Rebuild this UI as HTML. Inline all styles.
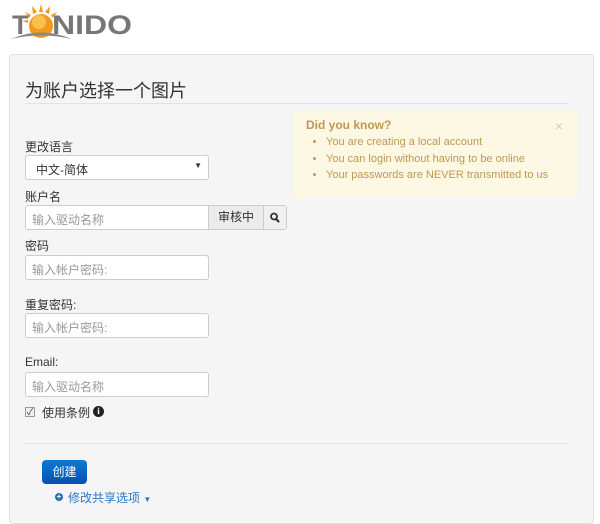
<!DOCTYPE html>
<html><head><meta charset="utf-8"><style>
*{box-sizing:border-box;margin:0;padding:0}
body{width:600px;height:504px;overflow:hidden;background:#fff;font-family:"Liberation Sans","Noto Sans CJK SC",sans-serif;font-size:12px;color:#333;position:relative}
.abs{position:absolute}
.panel{left:9px;top:54px;width:585px;height:470px;background:#f5f5f5;border:1px solid #e0e0e0;border-radius:4px}
.inp{position:absolute;left:25px;width:184px;height:25px;background:#fff;border:1px solid #ccc;border-radius:3px;color:#999;font-size:12px;padding:5px 6px}
.lbl{position:absolute;left:25px;font-size:12px;color:#333}
.alert{left:293px;top:110px;width:284px;height:88px;background:#fcf8e3;border-radius:3px;color:#c09853;font-size:11px;padding:8px 13px}
.alert b{font-size:12px}
.alert ul{margin-left:20px;margin-top:2px}
.alert li{line-height:16.5px}
</style></head><body>
<svg class="abs" style="left:10px;top:2px" width="125" height="38" viewBox="0 0 125 38">
<g fill="#f39a1c">
<polygon points="31,2 33,10 29,10"/><polygon points="40,4 39,12 35,10"/><polygon points="22,4 27,10 23,12"/>
<polygon points="47,10 43,16 41,13"/><polygon points="15,10 21,13 19,16"/>
<polygon points="50,19 44,21 44,18"/><polygon points="12,19 18,18 18,21"/>
</g>
<circle cx="31" cy="24" r="12" fill="#f39a1c"/>
<circle cx="29" cy="20" r="7" fill="#fbbf50"/>
<text x="2" y="32" font-family="Liberation Sans" font-weight="bold" font-size="27" fill="#777">T</text>
<text x="42" y="32" font-family="Liberation Sans" font-weight="bold" font-size="27" fill="#777" textLength="80" lengthAdjust="spacingAndGlyphs">NIDO</text>
<path d="M1,37 Q31,24 62,37 Q31,30 1,37Z" fill="#888"/>
</svg>
<div class="abs panel"></div>
<div class="abs" style="left:25px;top:77px;font-size:18px;color:#333">为账户选择一个图片</div>
<div class="abs" style="left:25px;top:103px;width:543px;height:1px;background:#e2e2e2"></div>
<div class="abs alert"><b>Did you know?</b><span style="position:absolute;right:14px;top:8px;color:#ccc;font-size:14px">×</span>
<ul><li>You are creating a local account</li><li>You can login without having to be online</li><li>Your passwords are NEVER transmitted to us</li></ul></div>
<div class="lbl" style="top:138px">更改语言</div>
<div class="inp" style="top:155px;color:#333;padding-left:10px">中文-简体<span style="position:absolute;right:6px;top:5px;font-size:8px">▼</span></div>
<div class="lbl" style="top:188px">账户名</div>
<div class="inp" style="top:205px;border-radius:3px 0 0 3px">输入驱动名称</div>
<div class="abs" style="left:208px;top:205px;width:56px;height:25px;background:#ebebeb;border:1px solid #ccc;font-size:12px;text-align:center;line-height:23px">审核中</div>
<div class="abs" style="left:263px;top:205px;width:24px;height:25px;background:#f0f0f0;border:1px solid #ccc;border-radius:0 3px 3px 0">
<svg width="22" height="23" viewBox="0 0 22 23"><circle cx="10" cy="10.5" r="3" fill="none" stroke="#333" stroke-width="1.8"/><path d="M12,13 L14.5,15.5" stroke="#333" stroke-width="2.2" stroke-linecap="round"/></svg></div>
<div class="lbl" style="top:237px">密码</div>
<div class="inp" style="top:255px">输入帐户密码:</div>
<div class="lbl" style="top:296px">重复密码:</div>
<div class="inp" style="top:313px">输入帐户密码:</div>
<div class="lbl" style="top:355px">Email:</div>
<div class="inp" style="top:372px">输入驱动名称</div>
<div class="abs" style="left:25px;top:407px;width:10px;height:10px;border:1px solid #999;background:#eee;font-size:9px;line-height:8px;text-align:center">✓</div>
<div class="abs" style="left:42px;top:404px;font-size:12px">使用条例</div>
<div class="abs" style="left:93px;top:406px;width:11px;height:11px;border-radius:50%;background:#222;color:#fff;font-size:9px;font-weight:bold;text-align:center;line-height:11px;font-family:'Liberation Serif',serif">i</div>
<div class="abs" style="left:25px;top:443px;width:543px;height:1px;background:#e2e2e2"></div>
<div class="abs" style="left:42px;top:460px;width:45px;height:24px;background:linear-gradient(#0a7ad6,#0550b0);border-radius:4px;color:#fff;text-align:center;line-height:24px;font-size:12px">创建</div>
<div class="abs" style="left:55px;top:493px;width:8px;height:8px;border-radius:50%;background:#1a70c0;color:#fff;font-size:8px;line-height:8px;text-align:center;font-weight:bold">+</div>
<div class="abs" style="left:68px;top:489px;font-size:12px;color:#2a78c8">修改共享选项 <span style="font-size:8px">▼</span></div>
</body></html>
